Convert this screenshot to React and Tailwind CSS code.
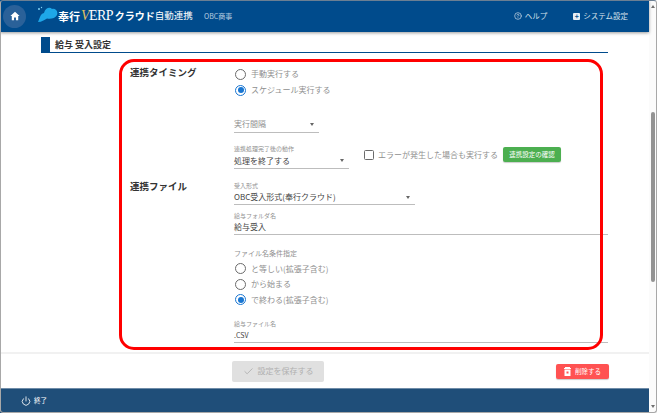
import React from "react";
import { Check, Power, CircleHelp } from "lucide-react";

const font = { fontFamily: '"Noto Sans CJK JP","Roboto","Liberation Sans",sans-serif' };

function Radio({ on, label, tight }) {
  return (
    <div className={"flex items-center gap-[5px] pl-[1px] " + (tight ? "h-[15.5px]" : "h-[16px]")}>
      <span className={"w-[11px] h-[11px] rounded-full border flex items-center justify-center shrink-0 " + (on ? "border-[#1976d2]" : "border-[#6b6b6b]")}>
        {on && <span className="w-[6px] h-[6px] rounded-full bg-[#1976d2]" />}
      </span>
      <span className="text-[8px] leading-none text-[#8f8f8f]">{label}</span>
    </div>
  );
}

function Caret() {
  return <span className="w-0 h-0 border-x-[2.5px] border-x-transparent border-t-[3px] border-t-[#666]" />;
}

export default function App() {
  return (
    <div style={font} className="relative w-[657px] h-[413px] overflow-hidden bg-white flex flex-col">
      <div className="flex flex-1 min-h-0">
        <div className="flex-1 min-w-0 flex flex-col">
          <header className="h-[32px] bg-[#004b8c] flex items-center shrink-0 shadow-[0_1px_3px_rgba(0,0,0,0.4)] z-10">
            <div className="ml-[3px] w-[23px] h-[23px] rounded-full bg-[#2a6199] flex items-center justify-center">
              <svg width="10" height="10" viewBox="0 0 10 10"><path d="M5 .8L.4 5H1.8V9.2H4V6.4H6V9.2H8.2V5H9.6Z" fill="white" /></svg>
            </div>
            <div className="ml-[11px] flex items-center w-[167px]">
              <svg width="21" height="17" viewBox="0 0 21 17" className="shrink-0 -mt-[3px]">
                <circle cx="2" cy="3" r="1" fill="#7fd0f5" />
                <circle cx="4.5" cy="1.5" r=".7" fill="#7fd0f5" />
                <path d="M1 16C3 12 3 8 7 7C8 2 13 .5 15 3C18 2 21.500 5 20 9C18 13 13 13 10 12.500C7 14 5 16 1 16Z" fill="#1ea7e8" />
              </svg>
              <span className="text-[11px] font-bold text-white leading-none whitespace-nowrap">奉行</span>
              <span style={{ fontFamily: '"Liberation Serif",serif' }} className="text-[14px] text-white leading-none whitespace-nowrap ml-[1px] tracking-[-0.6px]"><span className="text-[#e0c060] italic">V</span>ERP</span>
              <span className="text-[10px] font-bold text-white leading-none whitespace-nowrap ml-[2px]">クラウド</span>
              <span className="text-[9.5px] text-white leading-none whitespace-nowrap">自動連携</span>
            </div>
            <span className="text-[7px] text-[#b9cde0] whitespace-nowrap">OBC商事</span>
            <div className="ml-auto flex items-center text-[7.5px] text-[#d5e0ea] mr-[21px]">
              <CircleHelp size={8} className="mr-[3px]" />
              <span>ヘルプ</span>
              <span className="ml-[26px] w-[7px] h-[7px] bg-[#e6edf3] rounded-[1px] mr-[3px] flex items-center justify-center text-[#004b8c] text-[7px] leading-none font-bold">+</span>
              <span>システム設定</span>
            </div>
          </header>

          <main className="flex-1 min-h-0 overflow-hidden px-[41px] pt-[5px]">
            <div className="h-[16px] flex items-stretch border-b border-b-[#004b8c]">
              <div className="w-[9px] bg-[#004b8c]" />
              <div className="ml-[5px] text-[9px] font-bold text-[#333] leading-[15px]">給与 受入設定</div>
            </div>
            <div className="flex pl-[89px] pt-[13px]">
              <div className="w-[104px] shrink-0 flex flex-col text-[9.5px] font-bold text-[#333] leading-none pt-[2px]">
                <div>連携タイミング</div>
                <div className="mt-[104.5px]">連携ファイル</div>
              </div>
              <div className="flex-1 min-w-0">
                <Radio label="手動実行する" />
                <Radio on label="スケジュール実行する" />
                <div className="mt-[18px] w-[85px] h-[17px] border-b border-b-[#bdbdbd] flex items-center justify-between pr-[5px] text-[8px] text-[#8f8f8f]">
                  <span>実行間隔</span><Caret />
                </div>
                <div className="mt-[12px] flex items-start">
                  <div className="w-[115px] shrink-0 border-b border-b-[#bdbdbd]">
                    <div className="text-[6px] leading-[8px] text-[#8f8f8f] whitespace-nowrap">連携処理完了後の動作</div>
                    <div className="flex items-center justify-between pr-[5px] h-[15px] text-[8px] text-[#444] leading-none"><span>処理を終了する</span><Caret /></div>
                  </div>
                  <div className="ml-[15px] mt-[2px] flex items-center">
                    <span className="w-[10px] h-[10px] border border-[#6b6b6b] rounded-[1.5px]" />
                    <span className="ml-[4px] text-[8px] leading-none text-[#8f8f8f] whitespace-nowrap">エラーが発生した場合も実行する</span>
                    <span className="ml-[5px] w-[58px] h-[15px] rounded-[2px] bg-[#4caf50] text-white text-[6.5px] flex items-center justify-center shadow-[0_1px_1px_rgba(0,0,0,0.2)] leading-none whitespace-nowrap">連携設定の確認</span>
                  </div>
                </div>
                <div className="mt-[13px] w-[181px] border-b border-b-[#bdbdbd]">
                  <div className="text-[6px] leading-[8px] text-[#8f8f8f]">受入形式</div>
                  <div className="flex items-center justify-between pr-[5px] h-[14px] text-[8px] text-[#444] leading-none"><span>OBC受入形式(奉行クラウド)</span><Caret /></div>
                </div>
                <div className="mt-[7px] border-b border-b-[#bdbdbd]">
                  <div className="text-[6px] leading-[8px] text-[#8f8f8f]">給与フォルダ名</div>
                  <div className="h-[14px] text-[8px] text-[#444] leading-[14px]">給与受入</div>
                </div>
                <div className="mt-[13px] text-[7px] leading-[10px] text-[#8f8f8f]">ファイル名条件指定</div>
                <div className="mt-[3px]"><Radio tight label="と等しい(拡張子含む)" /></div>
                <Radio tight label="から始まる" />
                <Radio tight on label="で終わる(拡張子含む)" />
                <div className="mt-[12.500px] border-b border-b-[#bdbdbd]">
                  <div className="text-[6px] leading-[8px] text-[#8f8f8f]">給与ファイル名</div>
                  <div className="h-[14px] text-[7px] text-[#444] leading-[14px]">.CSV</div>
                </div>
              </div>
            </div>
          </main>

          <div className="h-[36px] shrink-0 border-t-2 border-t-[#f1f1f1] relative flex items-center justify-center">
            <div className="ml-[-93px] w-[92px] h-[21px] bg-[#e0e0e0] rounded-[2px] flex items-center justify-center gap-[4px] text-[8px] text-[#b0b0b0]">
              <Check size={11} /> 設定を保存する
            </div>
            <div className="absolute right-[40px] top-[10px] w-[53px] h-[15px] rounded-[2px] bg-[#ff5252] text-white text-[6.5px] flex items-center justify-center gap-[4px] shadow-[0_1px_1px_rgba(0,0,0,0.2)]">
              <svg width="7" height="9" viewBox="0 0 7 9"><path d="M1 0H6V1H7V2H0V1H1ZM.5 2.500H6.500V9H.5Z" fill="white" /><rect x="2.500" y="4.500" width="2" height="2" fill="#ff5252" /></svg>
              <span>削除する</span>
            </div>
          </div>

          <footer className="h-[25px] shrink-0 bg-[#1f4e79] flex items-center pl-[21px] pb-[1px] text-white text-[6.5px] gap-[3px] border-t border-t-[#6f8ca8]">
            <Power size={10} /> 終了
          </footer>
        </div>
        <div className="w-[8px] shrink-0 bg-[#fbfbfb] flex flex-col items-center relative">
          <span className="mt-[5px] w-0 h-0 border-x-[2.5px] border-x-transparent border-b-[3px] border-b-[#707070]" />
          <span className="mt-[104px] w-[4px] h-[170px] bg-[#939393] rounded-[2px]" />
          <span className="mt-auto mb-[5px] w-0 h-0 border-x-[2.5px] border-x-transparent border-t-[3px] border-t-[#707070]" />
        </div>
      </div>

      <div className="absolute left-[119px] top-[59px] w-[484px] h-[291px] border-[3px] border-[#f00] rounded-[15px] pointer-events-none" />
      <div className="absolute inset-0 border border-[#a8a8a8] border-t-[#6b7f93] rounded-[3px] pointer-events-none z-20" />
    </div>
  );
}
